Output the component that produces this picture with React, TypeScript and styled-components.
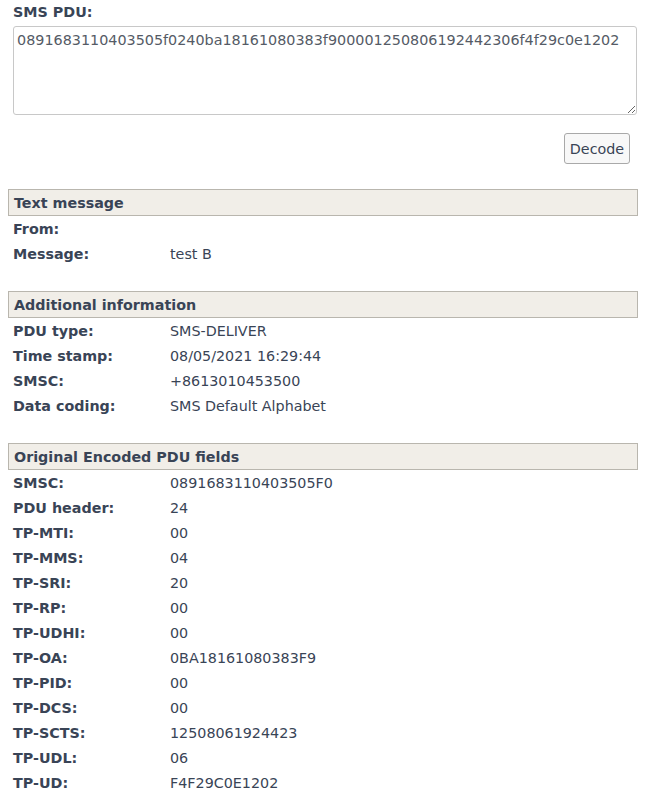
import React from 'react';
import styled, { createGlobalStyle } from 'styled-components';

const GlobalStyle = createGlobalStyle`
  body {
    margin: 4px 8px 8px;
    background: #ffffff;
    font-family: "DejaVu Sans", Verdana, sans-serif;
    font-size: 14.3px;
    color: #394456;
  }
`;

const Page = styled.div`
  width: 630px;
`;

const InputBlock = styled.div`
  padding: 0 1px 0 5px;
`;

const InputLabel = styled.label`
  display: block;
  font-weight: bold;
  line-height: 17px;
  height: 22px;
`;

const PduInput = styled.textarea`
  display: block;
  box-sizing: border-box;
  width: 624px;
  height: 89px;
  margin: 0;
  padding: 5px 3px;
  border: 1px solid #c8c8c8;
  border-radius: 3px;
  font-family: "DejaVu Sans", Verdana, sans-serif;
  font-size: 14.35px;
  line-height: 17px;
  color: #555b66;
  resize: vertical;
  outline: none;
`;

const ButtonRow = styled.div`
  display: flex;
  justify-content: flex-end;
  padding: 18px 8px 25px 0;
`;

const DecodeButton = styled.button`
  box-sizing: border-box;
  width: 66px;
  height: 31px;
  padding: 0;
  border: 1px solid #a9a9a9;
  border-radius: 3px;
  background: #f8f8f8;
  font-family: "DejaVu Sans", Verdana, sans-serif;
  font-size: 14.3px;
  color: #394456;
`;

const Section = styled.section`
  margin-bottom: 25px;
`;

const SectionHeader = styled.h3`
  box-sizing: border-box;
  height: 27px;
  margin: 0;
  padding: 1px 5px 0;
  border: 1px solid #b9b6ae;
  background: #f1eee8;
  font-size: 14.3px;
  font-weight: bold;
  line-height: 24px;
`;

const Row = styled.div`
  display: grid;
  grid-template-columns: 157px 1fr;
  box-sizing: border-box;
  height: 25px;
  align-items: center;
  padding: 2px 0 0 5px;
  line-height: 17px;
`;

const Label = styled.span`
  font-weight: bold;
`;

const Value = styled.span``;

type Field = [string, string];

const sections: { title: string; fields: Field[] }[] = [
  {
    title: 'Text message',
    fields: [
      ['From:', ''],
      ['Message:', 'test B'],
    ],
  },
  {
    title: 'Additional information',
    fields: [
      ['PDU type:', 'SMS-DELIVER'],
      ['Time stamp:', '08/05/2021 16:29:44'],
      ['SMSC:', '+8613010453500'],
      ['Data coding:', 'SMS Default Alphabet'],
    ],
  },
  {
    title: 'Original Encoded PDU fields',
    fields: [
      ['SMSC:', '0891683110403505F0'],
      ['PDU header:', '24'],
      ['TP-MTI:', '00'],
      ['TP-MMS:', '04'],
      ['TP-SRI:', '20'],
      ['TP-RP:', '00'],
      ['TP-UDHI:', '00'],
      ['TP-OA:', '0BA18161080383F9'],
      ['TP-PID:', '00'],
      ['TP-DCS:', '00'],
      ['TP-SCTS:', '12508061924423'],
      ['TP-UDL:', '06'],
      ['TP-UD:', 'F4F29C0E1202'],
    ],
  },
];

const App: React.FC = () => {
  return (
    <Page>
      <GlobalStyle />
      <InputBlock>
        <InputLabel htmlFor="pdu">SMS PDU:</InputLabel>
        <PduInput
          id="pdu"
          defaultValue="0891683110403505f0240ba18161080383f900001250806192442306f4f29c0e1202"
        />
      </InputBlock>
      <ButtonRow>
        <DecodeButton>Decode</DecodeButton>
      </ButtonRow>
      {sections.map((s) => (
        <Section key={s.title}>
          <SectionHeader>{s.title}</SectionHeader>
          {s.fields.map(([label, value]) => (
            <Row key={s.title + label}>
              <Label>{label}</Label>
              <Value>{value}</Value>
            </Row>
          ))}
        </Section>
      ))}
    </Page>
  );
};

export default App;
